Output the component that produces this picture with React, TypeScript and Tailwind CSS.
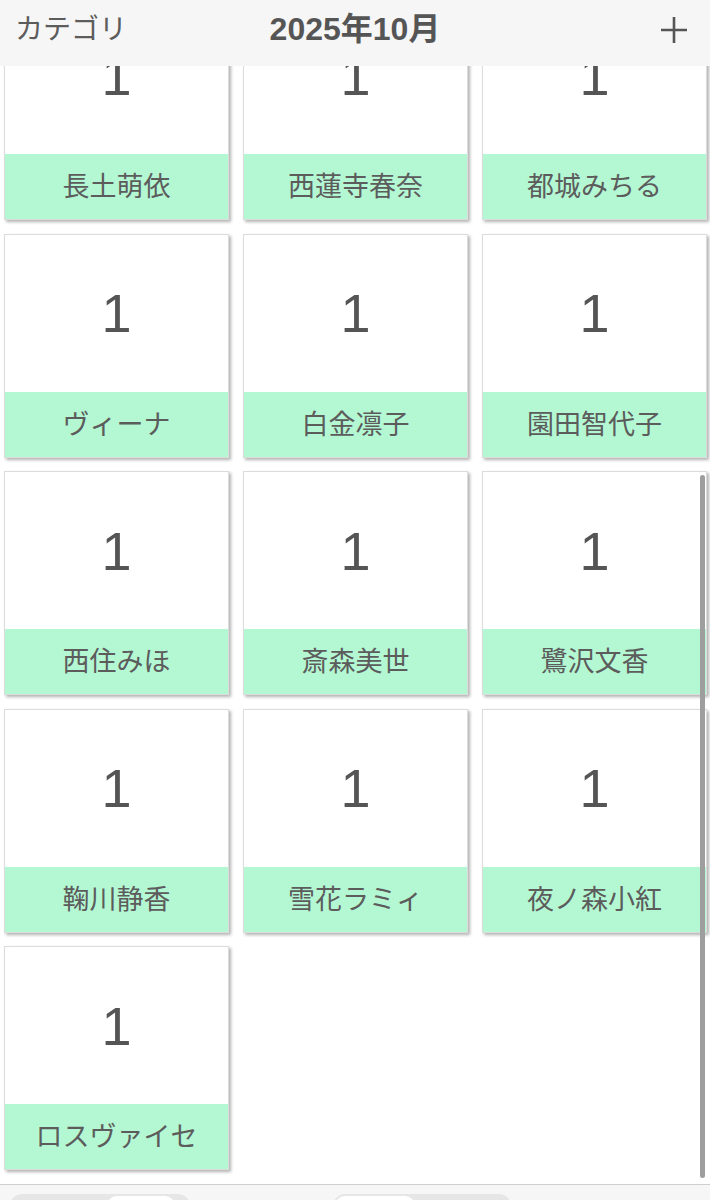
import React from 'react';

const names = [
  '長土萌依', '西蓮寺春奈', '都城みちる',
  'ヴィーナ', '白金凛子', '園田智代子',
  '西住みほ', '斎森美世', '鷺沢文香',
  '鞠川静香', '雪花ラミィ', '夜ノ森小紅',
  'ロスヴァイセ',
];

const font = { fontFamily: '"Liberation Sans", "Noto Sans CJK JP", sans-serif' };

const Card: React.FC<{ name: string; count: number }> = ({ name, count }) => (
  <div className="h-[224px] flex flex-col bg-white border border-[#dcdcdc] shadow-[2px_2px_3px_rgba(0,0,0,0.3)]">
    <div className="flex-1 flex items-center justify-center text-[54px] text-[#555] leading-none">
      {count}
    </div>
    <div className="h-[65px] bg-[#b4f8d3] flex items-center justify-center text-[27px] text-[#5c5c5c] pt-[2px]">
      {name}
    </div>
  </div>
);

export default function App() {
  return (
    <div className="w-[710px] h-[1200px] flex flex-col bg-white overflow-hidden" style={font}>
      {/* Header */}
      <div className="h-[66px] shrink-0 bg-[#f6f6f6] flex items-center justify-between px-[15px] pb-[6px] relative z-10">
        <span className="text-[28px] leading-[36px] text-[#5c5c5c]">カテゴリ</span>
        <span className="absolute left-1/2 top-[10px] -translate-x-1/2 text-[32px] leading-[38px] font-bold text-[#555]">
          2025年10月
        </span>
        <svg width="30" height="30" viewBox="0 0 30 30" className="mr-[6px]">
          <path d="M15 2v26M2 15h26" stroke="#555" strokeWidth="2.6" />
        </svg>
      </div>

      {/* Grid */}
      <div className="flex-1 relative overflow-hidden">
        <div className="grid grid-cols-[225px_225px_225px] gap-x-[14px] gap-y-[13.5px] pl-[4px] mt-[-70px]">
          {names.map((n) => (
            <Card key={n} name={n} count={1} />
          ))}
        </div>
        <div className="absolute right-[5px] top-[409px] w-[5px] h-[703px] rounded-full bg-[#9e9e9e]" />
      </div>

      {/* Bottom bar */}
      <div className="h-[16px] shrink-0 bg-[#f6f6f6] border-t border-[#cfcfcf] relative overflow-hidden">
        <div className="absolute left-[10px] top-[9px] w-[180px] h-[24px] rounded-full bg-[#e6e6e6]">
          <div className="absolute left-[97px] top-[2px] w-[68px] h-[20px] rounded-full bg-white" />
        </div>
        <div className="absolute left-[333px] top-[9px] w-[178px] h-[24px] rounded-full bg-[#e6e6e6]">
          <div className="absolute left-[2px] top-[2px] w-[80px] h-[20px] rounded-full bg-white" />
        </div>
      </div>
    </div>
  );
}
